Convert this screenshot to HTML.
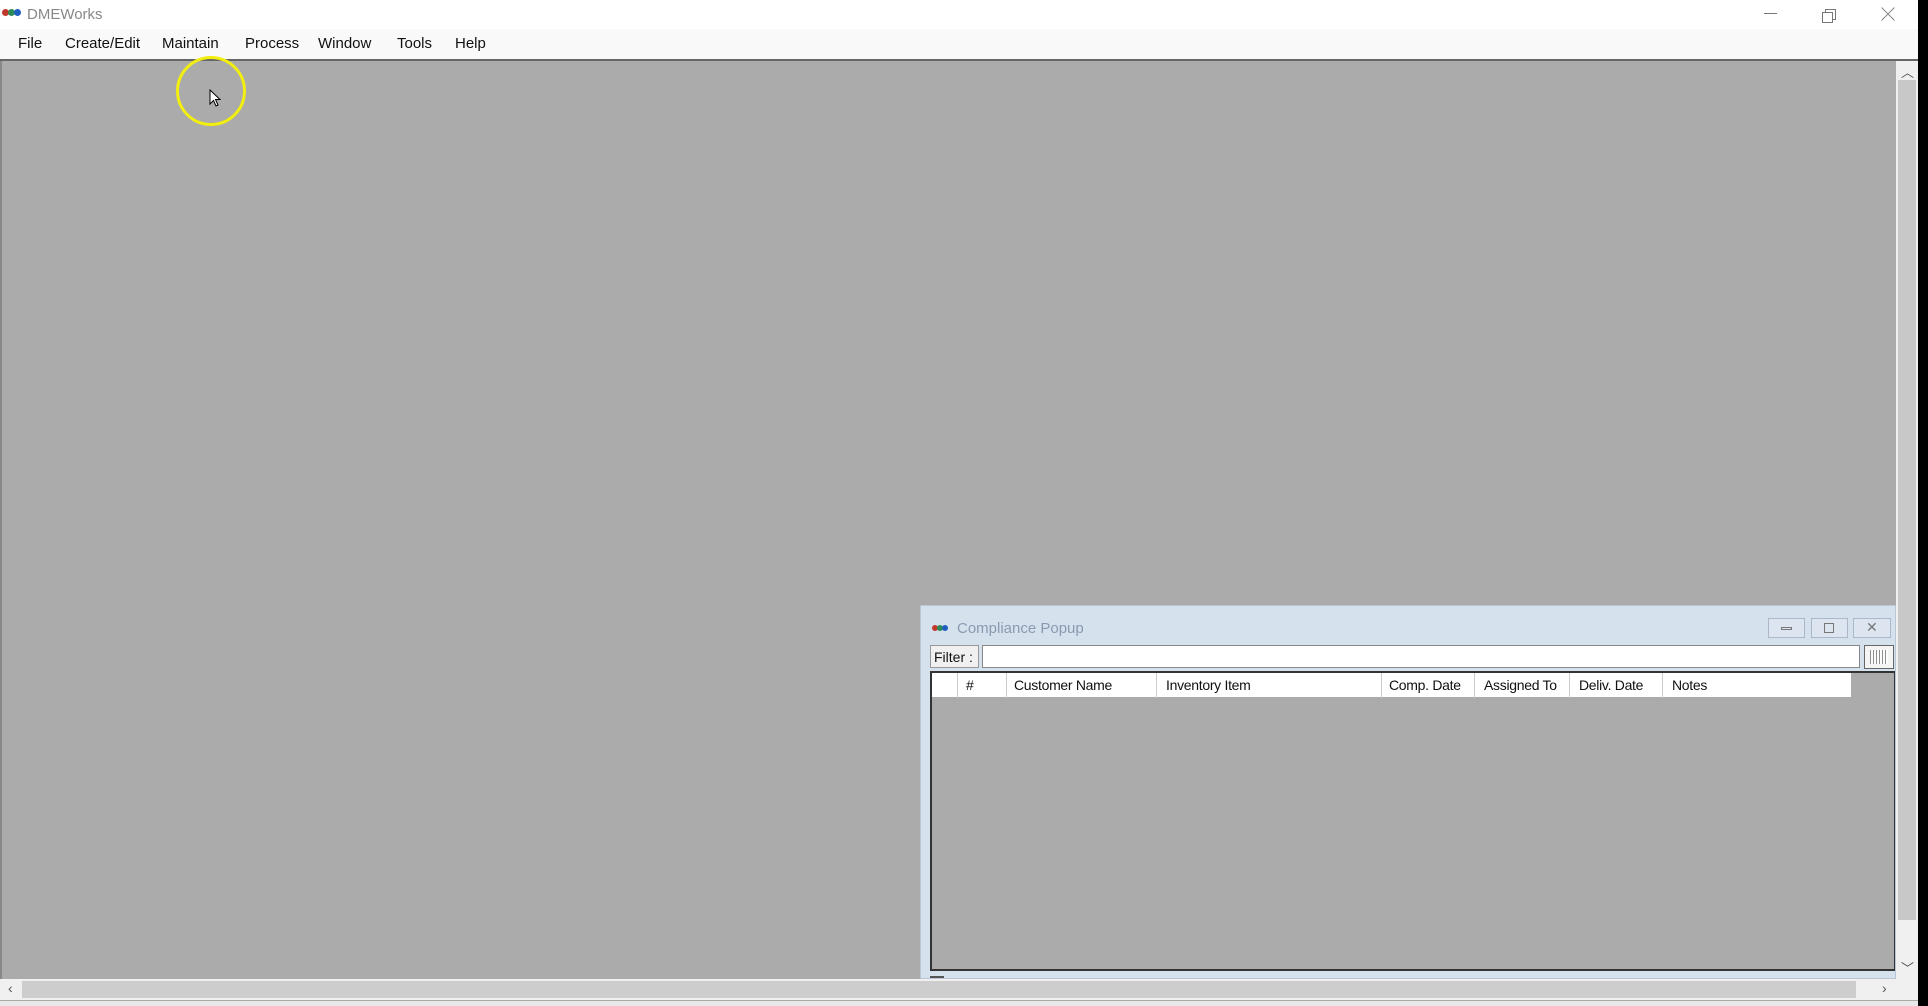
<!DOCTYPE html>
<html><head><meta charset="utf-8"><style>
*{margin:0;padding:0;box-sizing:border-box}
body{width:1928px;height:1006px;position:relative;overflow:hidden;background:#000;font-family:"Liberation Sans",sans-serif}
.a{position:absolute}
.menu span{position:absolute;top:35px;font-size:15px;color:#111}
.hdr span{position:absolute;top:4px;font-size:14px;color:#111;letter-spacing:-0.3px}
.col{position:absolute;top:0;height:25px;width:1px;background:#ccc}
</style></head><body>
<div class="a" style="left:0;top:0;width:1918px;height:1006px;background:#fff"></div>
<div class="a" style="left:2px;top:9px;width:7px;height:7px;border-radius:50%;background:#c0392b"></div>
<div class="a" style="left:8px;top:9px;width:7px;height:7px;border-radius:50%;background:#2e8b57"></div>
<div class="a" style="left:14px;top:9px;width:7px;height:7px;border-radius:50%;background:#1f5fbf"></div>
<div class="a" style="left:27px;top:6px;font-size:15px;color:#888">DMEWorks</div>
<div class="a" style="left:1764px;top:13px;width:13px;height:1px;background:#777"></div>
<div class="a" style="left:1825px;top:9px;width:11px;height:11px;border:1px solid #777"></div>
<div class="a" style="left:1822px;top:12px;width:11px;height:11px;border:1px solid #777;background:#fff"></div>
<svg class="a" style="left:1881px;top:7px" width="14" height="14"><path d="M0.5 0.5L13.5 13.5M13.5 0.5L0.5 13.5" stroke="#888" stroke-width="1"/></svg>
<div class="a" style="left:0;top:29px;width:1918px;height:30px;background:#f9f9f9"></div>
<div class="menu"><span style="left:18px">File</span><span style="left:65px">Create/Edit</span><span style="left:162px">Maintain</span><span style="left:245px">Process</span><span style="left:318px">Window</span><span style="left:397px">Tools</span><span style="left:455px">Help</span></div>
<div class="a" style="left:0;top:59px;width:1918px;height:2px;background:#666"></div>
<div class="a" style="left:0;top:61px;width:1896px;height:918px;background:#ababab;border-left:2px solid #888"></div>
<div class="a" style="left:1896px;top:61px;width:22px;height:918px;background:#f0f0f0"></div>
<div class="a" style="left:1898px;top:80px;width:18px;height:840px;background:#c8c8c8"></div>
<div class="a" style="left:1901px;top:62px;font-size:13px;color:#555">︿</div>
<div class="a" style="left:1901px;top:958px;font-size:13px;color:#555">﹀</div>
<div class="a" style="left:0;top:979px;width:1918px;height:21px;background:#f0f0f0"></div>
<div class="a" style="left:22px;top:981px;width:1834px;height:17px;background:#cdcdcd"></div>
<div class="a" style="left:8px;top:980px;font-size:14px;color:#555">‹</div>
<div class="a" style="left:1882px;top:980px;font-size:14px;color:#555">›</div>
<div class="a" style="left:0;top:1000px;width:1918px;height:6px;background:#e8e8e8;border-top:1px solid #aaa"></div>
<div class="a" style="left:176px;top:56px;width:70px;height:70px;border:3px solid #f2ee10;border-radius:50%"></div>
<svg class="a" style="left:209px;top:89px" width="14" height="20"><path d="M1 1 L1 15 L4.5 11.5 L7 17 L9 16 L6.5 10.5 L11 10.5 Z" fill="#fff" stroke="#000" stroke-width="1"/></svg>
<div class="a" style="left:920px;top:605px;width:976px;height:374px;background:#d6e1ee;border:1px solid #b8c6d6"></div>
<div class="a" style="left:932px;top:625px;width:6px;height:6px;border-radius:50%;background:#c0392b"></div>
<div class="a" style="left:937px;top:625px;width:6px;height:6px;border-radius:50%;background:#2e8b57"></div>
<div class="a" style="left:942px;top:625px;width:6px;height:6px;border-radius:50%;background:#1f5fbf"></div>
<div class="a" style="left:957px;top:620px;font-size:15px;color:#8a9ab0">Compliance Popup</div>
<div class="a" style="left:1768px;top:618px;width:37px;height:20px;border:1px solid #aab8ca;background:#dde6f0"></div>
<div class="a" style="left:1781px;top:627px;width:11px;height:3px;border:1px solid #777"></div>
<div class="a" style="left:1811px;top:618px;width:37px;height:20px;border:1px solid #aab8ca;background:#dde6f0"></div>
<div class="a" style="left:1824px;top:623px;width:10px;height:10px;border:1px solid #777"></div>
<div class="a" style="left:1853px;top:618px;width:38px;height:20px;border:1px solid #aab8ca;background:#dde6f0"></div>
<div class="a" style="left:1866px;top:619px;font-size:14px;color:#777">✕</div>
<div class="a" style="left:930px;top:645px;width:49px;height:23px;background:#f0f0f0;border:1px solid #999"></div>
<div class="a" style="left:934px;top:649px;font-size:14px;color:#111">Filter :</div>
<div class="a" style="left:982px;top:645px;width:878px;height:23px;background:#fff;border:1px solid #888"></div>
<div class="a" style="left:1864px;top:645px;width:30px;height:24px;background:#f4f4f4;border:1px solid #666"></div>
<div class="a" style="left:1870px;top:650px;width:18px;height:14px;background:repeating-linear-gradient(90deg,#777 0 1px,transparent 1px 3px),#fff;opacity:.8"></div>
<div class="a" style="left:930px;top:671px;width:965px;height:300px;background:#ababab;border:1px solid #333;border-width:2px 1px 2px 2px"></div>
<div class="a hdr" style="left:932px;top:673px;width:919px;height:24px;background:#fff">
<div class="col" style="left:25px"></div><div class="col" style="left:74px"></div><div class="col" style="left:224px"></div><div class="col" style="left:449px"></div><div class="col" style="left:542px"></div><div class="col" style="left:637px"></div><div class="col" style="left:730px"></div>
<span style="left:34px">#</span><span style="left:82px">Customer Name</span><span style="left:234px">Inventory Item</span><span style="left:457px">Comp. Date</span><span style="left:552px">Assigned To</span><span style="left:647px">Deliv. Date</span><span style="left:740px">Notes</span>
</div>
<div class="a" style="left:930px;top:976px;width:14px;height:2px;background:#555"></div>
</body></html>
